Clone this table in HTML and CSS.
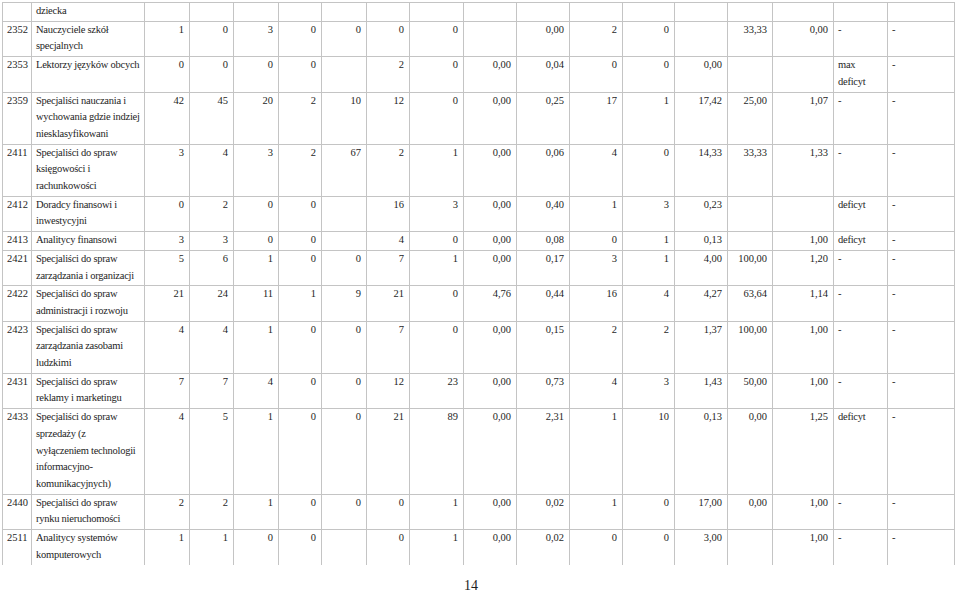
FILE: index.html
```html
<!DOCTYPE html>
<html lang="pl">
<head>
<meta charset="utf-8">
<title>Tabela</title>
<link rel="stylesheet" href="styles.css">
</head>
<body>
<div class="page">
<table class="grid">
<colgroup>
<col class="w29"><col class="w113"><col class="w45"><col class="w44"><col class="w45"><col class="w43"><col class="w45"><col class="w43"><col class="w54"><col class="w53"><col class="w53"><col class="w53"><col class="w52"><col class="w53"><col class="w45"><col class="w61"><col class="w54"><col class="w67">
</colgroup>
<tbody>
<tr><td class="code"></td><td class="name">dziecka</td><td></td><td></td><td></td><td></td><td></td><td></td><td></td><td></td><td></td><td></td><td></td><td></td><td></td><td></td><td class="ev"></td><td class="ev"></td></tr>
<tr><td class="code">2352</td><td class="name">Nauczyciele szkół<br>specjalnych</td><td>1</td><td>0</td><td>3</td><td>0</td><td>0</td><td>0</td><td>0</td><td></td><td>0,00</td><td>2</td><td>0</td><td></td><td>33,33</td><td>0,00</td><td class="ev">-</td><td class="ev">-</td></tr>
<tr><td class="code">2353</td><td class="name">Lektorzy języków obcych</td><td>0</td><td>0</td><td>0</td><td>0</td><td></td><td>2</td><td>0</td><td>0,00</td><td>0,04</td><td>0</td><td>0</td><td>0,00</td><td></td><td></td><td class="ev">max<br>deficyt</td><td class="ev">-</td></tr>
<tr><td class="code">2359</td><td class="name">Specjaliści nauczania i<br>wychowania gdzie indziej<br>niesklasyfikowani</td><td>42</td><td>45</td><td>20</td><td>2</td><td>10</td><td>12</td><td>0</td><td>0,00</td><td>0,25</td><td>17</td><td>1</td><td>17,42</td><td>25,00</td><td>1,07</td><td class="ev">-</td><td class="ev">-</td></tr>
<tr><td class="code">2411</td><td class="name">Specjaliści do spraw<br>księgowości i<br>rachunkowości</td><td>3</td><td>4</td><td>3</td><td>2</td><td>67</td><td>2</td><td>1</td><td>0,00</td><td>0,06</td><td>4</td><td>0</td><td>14,33</td><td>33,33</td><td>1,33</td><td class="ev">-</td><td class="ev">-</td></tr>
<tr><td class="code">2412</td><td class="name">Doradcy finansowi i<br>inwestycyjni</td><td>0</td><td>2</td><td>0</td><td>0</td><td></td><td>16</td><td>3</td><td>0,00</td><td>0,40</td><td>1</td><td>3</td><td>0,23</td><td></td><td></td><td class="ev">deficyt</td><td class="ev">-</td></tr>
<tr><td class="code">2413</td><td class="name">Analitycy finansowi</td><td>3</td><td>3</td><td>0</td><td>0</td><td></td><td>4</td><td>0</td><td>0,00</td><td>0,08</td><td>0</td><td>1</td><td>0,13</td><td></td><td>1,00</td><td class="ev">deficyt</td><td class="ev">-</td></tr>
<tr><td class="code">2421</td><td class="name">Specjaliści do spraw<br>zarządzania i organizacji</td><td>5</td><td>6</td><td>1</td><td>0</td><td>0</td><td>7</td><td>1</td><td>0,00</td><td>0,17</td><td>3</td><td>1</td><td>4,00</td><td>100,00</td><td>1,20</td><td class="ev">-</td><td class="ev">-</td></tr>
<tr><td class="code">2422</td><td class="name">Specjaliści do spraw<br>administracji i rozwoju</td><td>21</td><td>24</td><td>11</td><td>1</td><td>9</td><td>21</td><td>0</td><td>4,76</td><td>0,44</td><td>16</td><td>4</td><td>4,27</td><td>63,64</td><td>1,14</td><td class="ev">-</td><td class="ev">-</td></tr>
<tr><td class="code">2423</td><td class="name">Specjaliści do spraw<br>zarządzania zasobami<br>ludzkimi</td><td>4</td><td>4</td><td>1</td><td>0</td><td>0</td><td>7</td><td>0</td><td>0,00</td><td>0,15</td><td>2</td><td>2</td><td>1,37</td><td>100,00</td><td>1,00</td><td class="ev">-</td><td class="ev">-</td></tr>
<tr><td class="code">2431</td><td class="name">Specjaliści do spraw<br>reklamy i marketingu</td><td>7</td><td>7</td><td>4</td><td>0</td><td>0</td><td>12</td><td>23</td><td>0,00</td><td>0,73</td><td>4</td><td>3</td><td>1,43</td><td>50,00</td><td>1,00</td><td class="ev">-</td><td class="ev">-</td></tr>
<tr><td class="code">2433</td><td class="name">Specjaliści do spraw<br>sprzedaży (z<br>wyłączeniem technologii<br>informacyjno-<br>komunikacyjnych)</td><td>4</td><td>5</td><td>1</td><td>0</td><td>0</td><td>21</td><td>89</td><td>0,00</td><td>2,31</td><td>1</td><td>10</td><td>0,13</td><td>0,00</td><td>1,25</td><td class="ev">deficyt</td><td class="ev">-</td></tr>
<tr><td class="code">2440</td><td class="name">Specjaliści do spraw<br>rynku nieruchomości</td><td>2</td><td>2</td><td>1</td><td>0</td><td>0</td><td>0</td><td>1</td><td>0,00</td><td>0,02</td><td>1</td><td>0</td><td>17,00</td><td>0,00</td><td>1,00</td><td class="ev">-</td><td class="ev">-</td></tr>
<tr class="cut"><td class="code">2511</td><td class="name">Analitycy systemów<br>komputerowych</td><td>1</td><td>1</td><td>0</td><td>0</td><td></td><td>0</td><td>1</td><td>0,00</td><td>0,02</td><td>0</td><td>0</td><td>3,00</td><td></td><td>1,00</td><td class="ev">-</td><td class="ev">-</td></tr>
</tbody>
</table>
<div class="pagenum">14</div>
</div>
</body>
</html>
```

FILE: styles.css
```css
html, body {
  margin: 0;
  padding: 0;
  background: #ffffff;
}

.page {
  width: 959px;
  height: 591px;
  overflow: hidden;
  padding: 2px 0 0 2px;
  box-sizing: border-box;
  font-family: "Liberation Serif", "Times New Roman", serif;
  color: #1e1e1e;
}

.grid {
  border-collapse: collapse;
  table-layout: fixed;
  width: 953px;
  font-size: 10.5px;
  line-height: 16.7px;
}

.grid td {
  border: 1px solid #c4c4c4;
  padding: 0 5px 1px 4px;
  vertical-align: top;
  text-align: right;
  white-space: nowrap;
  overflow: hidden;
}

.grid td.code,
.grid td.name,
.grid td.ev {
  text-align: left;
}

.grid td.name,
.grid td.ev {
  letter-spacing: -0.25px;
}

.grid tr.cut td {
  border-bottom: 0;
}

.w29 { width: 29px; }
.w43 { width: 43px; }
.w44 { width: 44px; }
.w45 { width: 45px; }
.w52 { width: 52px; }
.w53 { width: 53px; }
.w54 { width: 54px; }
.w61 { width: 61px; }
.w67 { width: 67px; }
.w113 { width: 113px; }

.pagenum {
  margin-top: 13px;
  padding-right: 19px;
  text-align: center;
  font-size: 14px;
  line-height: 16px;
  color: #1e1e1e;
}
```
